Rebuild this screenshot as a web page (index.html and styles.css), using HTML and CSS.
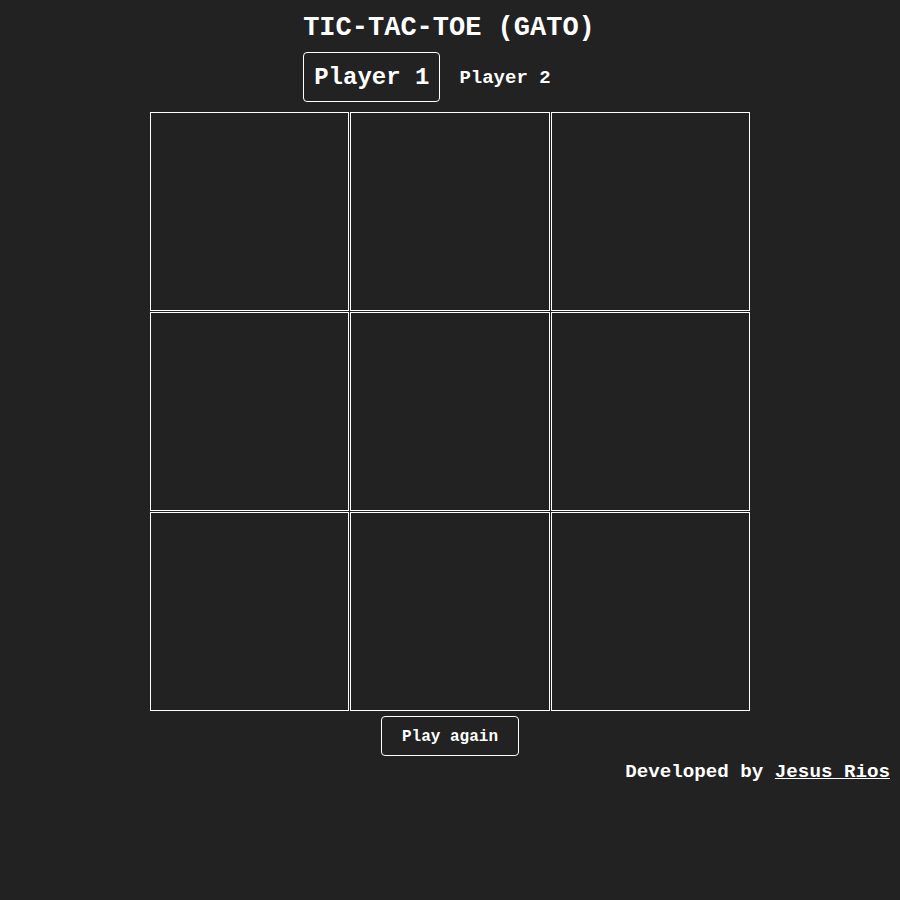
FILE: index.html
```html
<!DOCTYPE html>
<html>
<head>
<meta charset="utf-8">
<link rel="stylesheet" href="styles.css">
</head>
<body>
<div class="page">
  <div class="header">
    <h1 class="title">TIC-TAC-TOE (GATO)</h1>
    <div class="players">
      <div class="player active">Player 1</div>
      <div class="player">Player 2</div>
    </div>
  </div>
  <div class="board">
    <div class="cell"></div><div class="cell"></div><div class="cell"></div>
    <div class="cell"></div><div class="cell"></div><div class="cell"></div>
    <div class="cell"></div><div class="cell"></div><div class="cell"></div>
  </div>
  <button class="again">Play again</button>
  <footer class="footer">Developed by <a href="#" class="author">Jesus Rios</a></footer>
</div>
</body>
</html>
```
FILE: styles.css
```css
html, body {
  margin: 0;
  padding: 0;
  background: #222222;
  color: #ffffff;
  font-family: "Liberation Mono", "Courier New", monospace;
}
.page {
  display: flex;
  flex-direction: column;
  align-items: center;
  padding-top: 10px;
}
.header {
  display: flex;
  flex-direction: column;
  align-items: flex-start;
  margin-left: -2px;
}
.title {
  margin: 0;
  font-size: 27px;
  line-height: 36px;
  font-weight: bold;
}
.players {
  display: flex;
  align-items: center;
  margin-top: 6px;
  gap: 8px;
}
.player {
  border: 1px solid transparent;
  border-radius: 4px;
  padding: 2px 10px 0;
  font-size: 19px;
  font-weight: bold;
  line-height: 46px;
}
.player.active {
  border-color: #ffffff;
  font-size: 24px;
}
.board {
  margin-top: 10px;
  width: 600px;
  height: 599px;
  display: grid;
  grid-template-columns: repeat(3, 1fr);
  grid-template-rows: repeat(3, 1fr);
  gap: 1px;
}
.cell {
  box-sizing: border-box;
  border: 1px solid #ffffff;
}
.again {
  margin-top: 5px;
  width: 138px;
  height: 40px;
  padding: 2px 0 0;
  background: transparent;
  color: #ffffff;
  border: 1px solid #ffffff;
  border-radius: 4px;
  font-family: "Liberation Mono", "Courier New", monospace;
  font-size: 16px;
  font-weight: bold;
  cursor: pointer;
}
.footer {
  align-self: stretch;
  text-align: right;
  padding-right: 10px;
  margin-top: 4px;
  font-size: 19.2px;
  font-weight: bold;
  line-height: 24px;
}
.author {
  color: #ffffff;
}
```
